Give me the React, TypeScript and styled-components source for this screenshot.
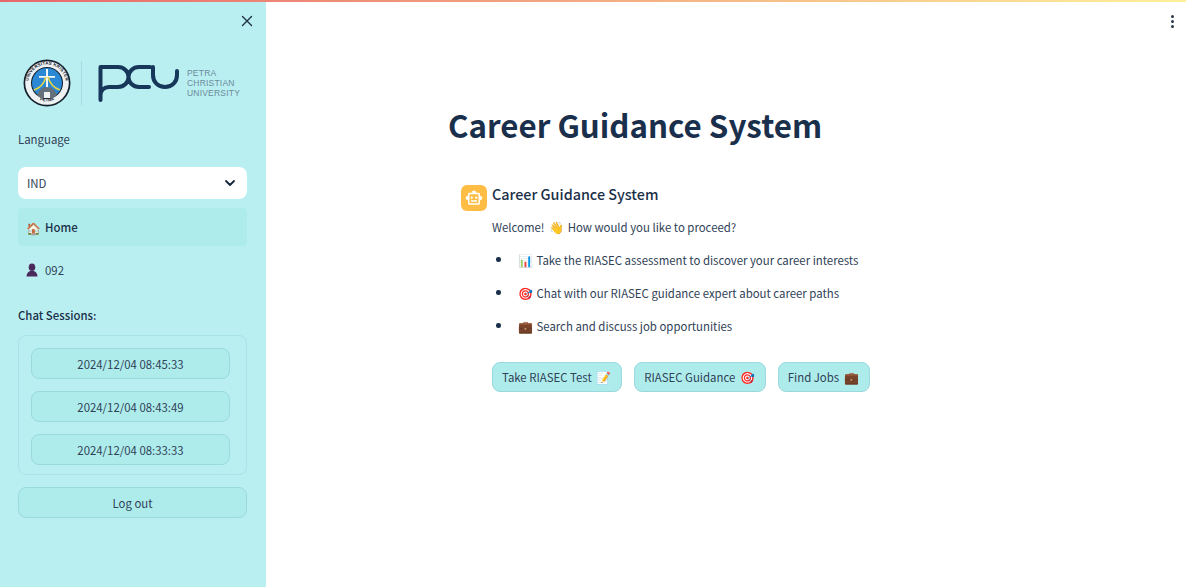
import React, { FC } from 'react';
import styled, { createGlobalStyle } from 'styled-components';
import { MdOutlineSmartToy } from 'react-icons/md';

const sessions = ['2024/12/04 08:45:33', '2024/12/04 08:43:49', '2024/12/04 08:33:33'];

const Seal: FC = () => (
  <svg width="48" height="48" viewBox="0 0 48 48">
    <defs>
      <path id="sealTop" d="M5.500 27a18.700 18.700 0 1 1 37 0" />
      <path id="sealBottom" d="M14 39.500a18.700 18.700 0 0 0 20 0" />
    </defs>
    <circle cx="24" cy="24" r="23.500" fill="#14202c" />
    <circle cx="24" cy="24" r="21.800" fill="#eef2f3" />
    <text fontSize="4.400" fontWeight="700" fill="#14202c" fontFamily="Liberation Sans, sans-serif" letterSpacing="0.2">
      <textPath href="#sealTop" startOffset="50%" textAnchor="middle">UNIVERSITAS KRISTEN</textPath>
    </text>
    <text fontSize="4.400" fontWeight="700" fill="#14202c" fontFamily="Liberation Sans, sans-serif">
      <textPath href="#sealBottom" startOffset="50%" textAnchor="middle">PETRA</textPath>
    </text>
    <circle cx="24" cy="24" r="16" fill="#141f2b" />
    <circle cx="24" cy="24" r="15" fill="#2a88d4" />
    <path d="M23 10h2v7h7v1.800h-7V32h-2V18.800h-7V17h7z" fill="#f5f8f8" />
    <path d="M11 31c6-2 10-6 12-13M37 31c-6-2-10-6-12-13" fill="none" stroke="#e6d545" strokeWidth="1.500" />
    <path d="M14 36c2-5 5-8 10-8s8 3 10 8l-4 3H18z" fill="#66707a" />
    <path d="M21 33h6v6h-6z" fill="#eef2f3" />
  </svg>
);

const PcuMark: FC = () => (
  <svg width="85" height="40" viewBox="0 0 85 40">
    <path
      d="M2.500 37V4H20c6 0 10.500 4.500 10.500 10S26 24 20 24h-9c-5 0-8.500 3.500-8.500 8M52 4H41c-6 0-10.500 4.500-10.500 10S35 24 41 24h10M55 4v8c0 7 5 12 12 12s12-5 12-12V8"
      fill="none"
      stroke="#17375a"
      strokeWidth="4"
      strokeLinecap="round"
      strokeLinejoin="round"
    />
  </svg>
);

const PersonEmoji: FC = () => (
  <svg width="12" height="14" viewBox="0 0 12 14">
    <ellipse cx="6" cy="4.300" rx="3.300" ry="3.800" fill="#4a2a5c" />
    <path d="M0.500 13.500c0-3.500 2-5 4-5.500h3c2 .5 4 2 4 5.500z" fill="#4a2a5c" />
  </svg>
);

const App: FC = () => (
  <>
    <GlobalStyle />
    <Page>
      <TopBar />
      <Sidebar>
        <CloseRow>
          <svg width="16" height="16" viewBox="0 0 16 16">
            <path d="M3.500 3.500l9 9M12.500 3.500l-9 9" stroke="#1f3146" strokeWidth="1.400" strokeLinecap="round" />
          </svg>
        </CloseRow>
        <LogoRow>
          <Seal />
          <LogoDivider />
          <PcuMark />
          <LogoText>
            <span>PETRA</span>
            <span>CHRISTIAN</span>
            <span>UNIVERSITY</span>
          </LogoText>
        </LogoRow>
        <FieldLabel>Language</FieldLabel>
        <Select>
          IND
          <svg width="12" height="12" viewBox="0 0 12 12">
            <path d="M2 4l4 4 4-4" fill="none" stroke="#14263c" strokeWidth="1.800" strokeLinecap="round" strokeLinejoin="round" />
          </svg>
        </Select>
        <NavItem $active>
          <NavEmoji>🏠</NavEmoji>Home
        </NavItem>
        <NavItem>
          <NavEmoji>
            <PersonEmoji />
          </NavEmoji>
          092
        </NavItem>
        <SessionsTitle>Chat Sessions:</SessionsTitle>
        <SessionsBox>
          {sessions.map((s) => (
            <Button key={s} type="button">
              {s}
            </Button>
          ))}
        </SessionsBox>
        <Button type="button">Log out</Button>
      </Sidebar>
      <Main>
        <Menu>
          <i />
          <i />
          <i />
        </Menu>
        <Title>Career Guidance System</Title>
        <Message>
          <Avatar>
            <MdOutlineSmartToy size={18} color="#fff" />
          </Avatar>
          <MessageBody>
            <MessageTitle>Career Guidance System</MessageTitle>
            <Paragraph>
              Welcome! <Emoji>👋</Emoji> How would you like to proceed?
            </Paragraph>
            <List>
              <li>
                <Emoji>📊</Emoji>Take the RIASEC assessment to discover your career interests
              </li>
              <li>
                <Emoji>🎯</Emoji>Chat with our RIASEC guidance expert about career paths
              </li>
              <li>
                <Emoji>💼</Emoji>Search and discuss job opportunities
              </li>
            </List>
            <Actions>
              <ActionButton type="button">
                Take RIASEC Test <Emoji>📝</Emoji>
              </ActionButton>
              <ActionButton type="button">
                RIASEC Guidance <Emoji>🎯</Emoji>
              </ActionButton>
              <ActionButton type="button">
                Find Jobs <Emoji>💼</Emoji>
              </ActionButton>
            </Actions>
          </MessageBody>
        </Message>
      </Main>
    </Page>
  </>
);

export default App;

const GlobalStyle = createGlobalStyle`
  html, body { margin: 0; padding: 0; height: 100%; overflow: hidden; }
  body {
    font-family: "Noto Sans CJK SC", "Noto Sans", sans-serif;
    color: #2f4257;
    background: #fff;
  }
  * { box-sizing: border-box; }
`;

const Page = styled.div`
  position: relative;
  display: flex;
  height: 587px;
`;

const TopBar = styled.div`
  position: absolute;
  top: 0;
  left: 0;
  right: 0;
  height: 2px;
  background: linear-gradient(90deg, #e8666a, #fdf09a);
`;

const Sidebar = styled.aside`
  width: 266px;
  flex: none;
  background: #baeff1;
  padding: 0 19px 0 18px;
  display: flex;
  flex-direction: column;
`;

const CloseRow = styled.div`
  display: flex;
  justify-content: flex-end;
  height: 58px;
  padding-top: 13px;
  margin-right: -8px;
`;

const LogoRow = styled.div`
  display: flex;
  align-items: center;
  height: 50px;
  padding-left: 5px;
  margin-bottom: 22px;
`;

const LogoDivider = styled.div`
  width: 1px;
  height: 44px;
  background: #a5dcdf;
  margin: 0 16px 0 10px;
`;

const LogoText = styled.div`
  display: flex;
  flex-direction: column;
  margin-left: 4px;
  font-family: "Liberation Sans", sans-serif;
  font-size: 8.500px;
  line-height: 10px;
  letter-spacing: 0.2px;
  color: #6a8a99;
`;

const FieldLabel = styled.div`
  font-size: 11.400px;
  line-height: 18px;
  margin-bottom: 19px;
`;

const Select = styled.div`
  height: 32px;
  background: #fff;
  border-radius: 8px;
  padding: 0 11px 0 9px;
  display: flex;
  align-items: center;
  justify-content: space-between;
  font-size: 11.400px;
  margin-bottom: 9px;
`;

const NavItem = styled.div<{ $active?: boolean }>`
  height: 38px;
  border-radius: 4px;
  padding: 0 8px;
  display: flex;
  align-items: center;
  font-size: 11.400px;
  font-weight: ${(p) => (p.$active ? 500 : 400)};
  color: ${(p) => (p.$active ? '#1b3049' : '#2f4257')};
  background: ${(p) => (p.$active ? '#aeecec' : 'transparent')};
  margin-bottom: 5px;
`;

const NavEmoji = styled.span`
  width: 19px;
  font-size: 12px;
  display: flex;
  align-items: center;
`;

const SessionsTitle = styled.div`
  margin-top: 12px;
  font-size: 11.400px;
  line-height: 18px;
  font-weight: 500;
  color: #1b3049;
  margin-bottom: 11px;
`;

const SessionsBox = styled.div`
  border: 1px solid #a8e3e5;
  border-radius: 8px;
  padding: 12px 16px 9px 12px;
  display: flex;
  flex-direction: column;
  gap: 12px;
  margin-bottom: 12px;
`;

const Button = styled.button`
  height: 31px;
  background: #aeecec;
  border: 1px solid #9bdadc;
  border-radius: 8px;
  font: inherit;
  font-size: 11.400px;
  color: #2f4257;
  padding: 0;
`;

const Main = styled.main`
  position: relative;
  flex: 1;
  padding: 102px 0 0 182px;
`;

const Menu = styled.div`
  position: absolute;
  top: 15px;
  right: 12px;
  display: flex;
  flex-direction: column;
  gap: 2px;
  i {
    width: 3px;
    height: 3px;
    border-radius: 50%;
    background: #2a3a4c;
  }
`;

const Title = styled.h1`
  margin: 0 0 37px;
  font-size: 31.300px;
  line-height: 46px;
  font-weight: 700;
  color: #1a2f4b;
`;

const Message = styled.div`
  display: flex;
  gap: 5px;
  padding-left: 13px;
`;

const Avatar = styled.div`
  width: 26px;
  height: 26px;
  border-radius: 6px;
  background: #ffbd45;
  display: flex;
  align-items: center;
  justify-content: center;
`;

const MessageBody = styled.div`
  display: flex;
  flex-direction: column;
`;

const MessageTitle = styled.div`
  font-size: 14.350px;
  line-height: 18px;
  font-weight: 500;
  color: #1b3049;
  margin-bottom: 15px;
`;

const Emoji = styled.span`
  font-size: 12px;
  line-height: 1;
`;

const Paragraph = styled.div`
  font-size: 11.400px;
  line-height: 18px;
  margin-bottom: 7px;
  ${Emoji} {
    margin: 0 1.500px;
  }
`;

const List = styled.ul`
  list-style: none;
  margin: 0 0 20px;
  padding: 0 0 0 4px;
  font-size: 11.400px;
  li {
    display: flex;
    align-items: center;
    line-height: 18px;
    padding: 7.500px 0;
  }
  li::before {
    content: '';
    width: 4.500px;
    height: 4.500px;
    border-radius: 50%;
    background: #1b3049;
    margin-right: 17px;
  }
  ${Emoji} {
    margin-right: 4px;
  }
`;

const Actions = styled.div`
  display: flex;
  gap: 12px;
`;

const ActionButton = styled(Button)`
  height: 30px;
  padding: 0 10px 0 9px;
  ${Emoji} {
    margin-left: 2px;
  }
`;
